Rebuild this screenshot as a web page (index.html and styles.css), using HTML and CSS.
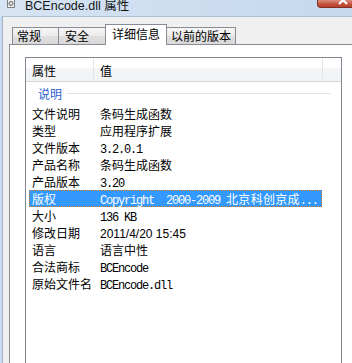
FILE: index.html
```html
<!DOCTYPE html>
<html lang="zh-CN">
<head>
<meta charset="utf-8">
<title>BCEncode.dll 属性</title>
<link rel="stylesheet" href="styles.css">
</head>
<body>
<div class="window">
  <div class="titlebar">
    <span class="appicon">
      <svg width="10" height="10" viewBox="0 0 10 10">
        <path d="M1.5 -2 H6.5 L8.5 0 V8.5 H1.5 Z" fill="#f2f2f2" stroke="#7d7d7d"/>
        <circle cx="5" cy="4.5" r="2.2" fill="#b9b9b9" stroke="#6f6f6f" stroke-width="0.8"/>
        <circle cx="5" cy="4.5" r="0.8" fill="#eeeeee"/>
      </svg>
    </span>
    <span class="title">BCEncode.dll 属性</span>
    <span class="close">
      <svg width="34" height="7" viewBox="0 0 34 7">
        <path d="M21 -4 L25 0 L29 -4 M21 4 L25 0 L29 4" stroke="#ffffff" stroke-width="2.2" fill="none"/>
      </svg>
    </span>
  </div>
  <div class="client">
    <div class="tabs">
      <div class="tab t1">常规</div>
      <div class="tab t2">安全</div>
      <div class="tab active">详细信息</div>
      <div class="tab t4">以前的版本</div>
    </div>
    <div class="panel">
      <div class="list">
        <div class="lv-head">
          <div class="hcol c1">属性</div>
          <div class="hcol c2">值</div>
          <div class="hcol c3"></div>
        </div>
        <div class="group"><span class="group-name">说明</span><span class="group-line"></span></div>
        <div class="row"><span class="k">文件说明</span><span class="v">条码生成函数</span></div>
        <div class="row"><span class="k">类型</span><span class="v">应用程序扩展</span></div>
        <div class="row"><span class="k">文件版本</span><span class="v"><span class="mono">3.2.0.1</span></span></div>
        <div class="row"><span class="k">产品名称</span><span class="v">条码生成函数</span></div>
        <div class="row"><span class="k">产品版本</span><span class="v"><span class="mono">3.20</span></span></div>
        <div class="row selected"><span class="k">版权</span><span class="v"><span class="mono">Copyright  2000-2009 </span><span class="spaced">北京科创京成</span><span class="mono">...</span></span></div>
        <div class="row"><span class="k">大小</span><span class="v"><span class="mono">136 KB</span></span></div>
        <div class="row"><span class="k">修改日期</span><span class="v"><span class="sans">2011/4/20 15:45</span></span></div>
        <div class="row"><span class="k">语言</span><span class="v">语言中性</span></div>
        <div class="row"><span class="k">合法商标</span><span class="v"><span class="mono">BCEncode</span></span></div>
        <div class="row"><span class="k">原始文件名</span><span class="v"><span class="mono">BCEncode.dll</span></span></div>
      </div>
    </div>
  </div>
</div>
</body>
</html>
```

FILE: styles.css
```css
html, body {
  margin: 0;
  padding: 0;
  background: #f0f0f0;
  overflow: hidden;
}

body {
  font-family: "Noto Sans CJK SC", "Liberation Sans", sans-serif;
  font-size: 12px;
  color: #000;
}

.window {
  width: 352px;
  height: 363px;
  overflow: hidden;
  background: #c9dbef;
  display: flex;
  flex-direction: column;
}

.titlebar {
  height: 16px;
  flex: none;
  display: flex;
  align-items: flex-start;
  background: linear-gradient(90deg, #d6e4f3 0%, #cfdff1 40%, #c5d8ee 100%);
  overflow: hidden;
}

.appicon {
  display: block;
  width: 10px;
  height: 10px;
  margin-left: 6px;
  margin-top: -1px;
}

.appicon svg {
  display: block;
}

.title {
  display: block;
  margin-left: 9px;
  margin-top: 0;
  font-family: "Liberation Sans", "Noto Sans CJK SC", sans-serif;
  font-size: 12.5px;
  line-height: 12px;
  color: #151515;
  white-space: nowrap;
}

.close {
  display: block;
  margin-left: auto;
  width: 34px;
  height: 7px;
  background: linear-gradient(#d98f7f, #c5503a 60%, #b8412c);
  border: 1px solid #7f3326;
  border-top: none;
  border-right: none;
  border-bottom-left-radius: 4px;
}

.close svg {
  display: block;
}

.client {
  flex: 1;
  margin-left: 2px;
  border-left: 1px solid #a2b3c6;
  border-top: 1px solid #aebfd2;
  background: #f0f0f0;
  padding: 7px 0 0 6px;
  overflow: hidden;
}

.tabs {
  display: flex;
  align-items: flex-end;
  height: 20px;
  margin-left: 3px;
}

.tab {
  box-sizing: border-box;
  height: 17px;
  border: 1px solid #898c95;
  border-bottom: none;
  background: linear-gradient(#f6f6f6, #ececec 50%, #dfdfdf 51%, #d9d9d9);
  line-height: 15px;
  white-space: nowrap;
  color: #000;
}

.t1 {
  width: 47px;
  padding-left: 4px;
}

.t2 {
  width: 49px;
  margin-left: -1px;
  padding-left: 6px;
}

.tab.active {
  position: relative;
  z-index: 1;
  width: 62px;
  height: 21px;
  margin-left: -2px;
  margin-bottom: -1px;
  padding-left: 6px;
  line-height: 17px;
  background: #ffffff;
}

.t4 {
  width: 70px;
  margin-left: -1px;
  padding-left: 4px;
}

.panel {
  width: 380px;
  height: 330px;
  border: 1px solid #898c95;
  background: #ffffff;
  padding: 12px 0 0 15px;
}

.list {
  box-sizing: border-box;
  width: 317px;
  height: 320px;
  border: 1px solid #828790;
  background: #ffffff;
}

.lv-head {
  display: flex;
  height: 23px;
  border-bottom: 1px solid #d5d5d5;
  background: linear-gradient(#ffffff 0, #ffffff 10px, #f4f5f7 10px, #f1f2f4 100%);
}

.hcol {
  box-sizing: border-box;
  height: 23px;
  line-height: 25px;
  padding-left: 6px;
  border-right: 1px solid #e3e4e7;
}

.c1 {
  width: 68px;
}

.c2 {
  width: 229px;
}

.c3 {
  flex: 1;
  border-right: none;
}

.group {
  display: flex;
  align-items: center;
  height: 23px;
  padding-left: 12px;
  padding-right: 10px;
}

.group-name {
  color: #2c5cd0;
  line-height: 23px;
}

.group-line {
  flex: 1;
  height: 1px;
  margin-left: 5px;
  background: #e1e3e8;
}

.row {
  box-sizing: border-box;
  width: 293px;
  height: 17px;
  margin-left: 3px;
  border: 1px solid transparent;
  padding-left: 2px;
  display: grid;
  grid-template-columns: 62px 1fr;
  line-height: 15px;
  white-space: nowrap;
}

.v {
  padding-left: 6px;
  white-space: pre;
}

.mono {
  font-family: "Liberation Mono", monospace;
  font-size: 12px;
  letter-spacing: -1.2px;
  white-space: pre;
}

.sans {
  font-family: "Liberation Sans", sans-serif;
  font-size: 12px;
}

.spaced {
  letter-spacing: 0.3px;
}

.row.selected {
  background: #3399ff;
  color: #ffffff;
  border: 1px dotted #d9781e;
}
```
